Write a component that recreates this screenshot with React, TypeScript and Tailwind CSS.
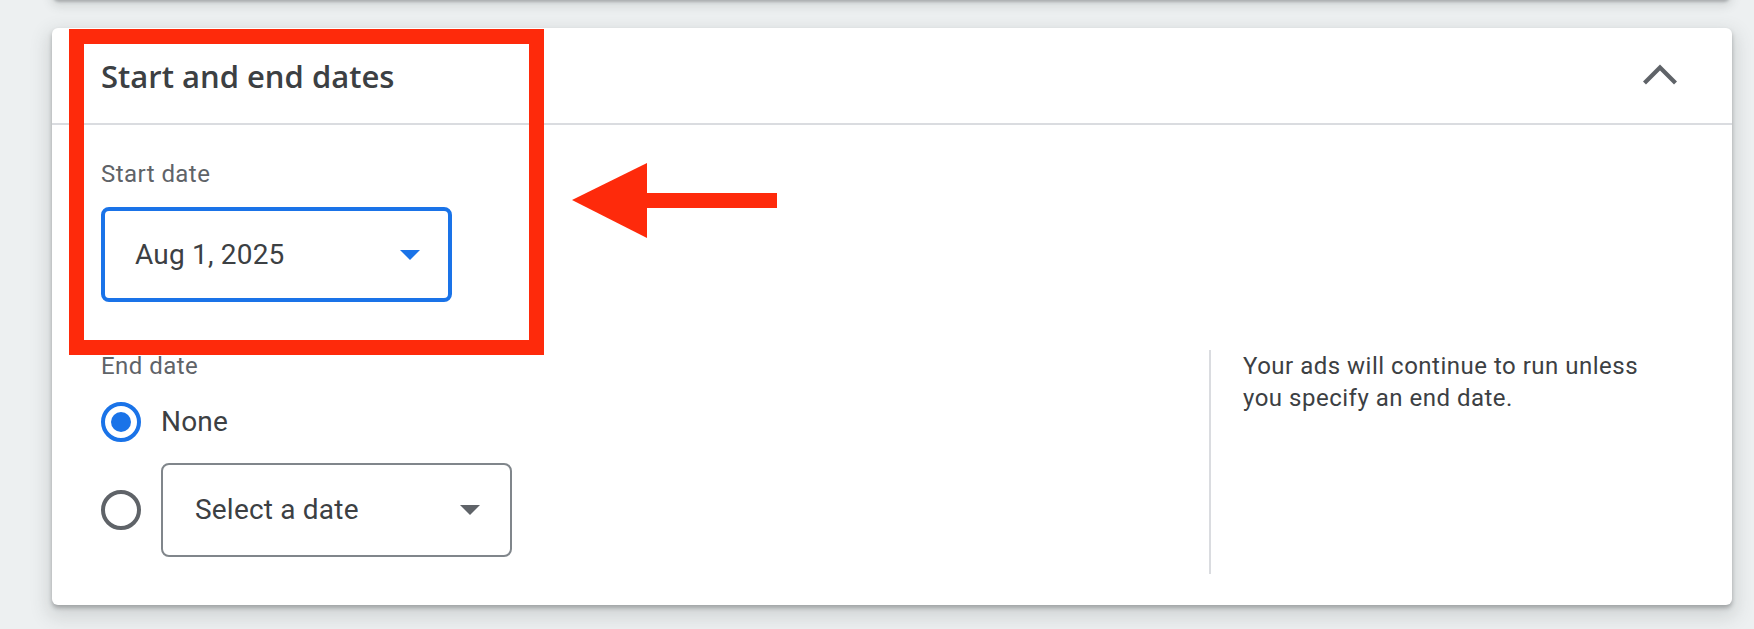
import React from 'react';

function Caret({ color }: { color: string }) {
  return (
    <svg width="20" height="10" viewBox="0 0 20 10" className="shrink-0">
      <polygon points="0,0 20,0 10,10" fill={color} />
    </svg>
  );
}

function Radio({ checked }: { checked: boolean }) {
  return (
    <div
      className={`w-[40px] h-[40px] shrink-0 rounded-full border-4 flex items-center justify-center ${
        checked ? 'border-[#1a73e8]' : 'border-[#5f6368]'
      }`}
    >
      {checked && <div className="w-[20px] h-[20px] rounded-full bg-[#1a73e8]" />}
    </div>
  );
}

export default function App() {
  return (
    <div className="relative flex flex-col w-full h-[629px] overflow-hidden bg-[#edf0f1] font-['Roboto',sans-serif]">
      {/* bottom of the card above */}
      <div className="h-[20px] -mt-[20px] ml-[53px] mr-[24px] bg-white rounded-b-[6px] shadow-[0_2px_3px_rgba(60,64,67,0.3),0_4px_10px_3px_rgba(60,64,67,0.12)]" />

      <div className="mt-[28px] ml-[52px] mr-[22px] bg-white rounded-[6px] shadow-[0_3px_4px_rgba(60,64,67,0.35),0_8px_18px_5px_rgba(60,64,67,0.15)]">
        <div className="h-[97px] flex items-center justify-between pl-[49px] pr-[54px] border-b-2 border-[#dadce0]">
          <h2 className="text-[31px] leading-[40px] font-semibold text-[#3c4043] font-['Open_Sans',sans-serif]">
            Start and end dates
          </h2>
          <svg width="36" height="24" viewBox="0 0 36 24">
            <polyline
              points="2.5,19 18,3.5 33.5,19"
              fill="none"
              stroke="#5f6368"
              strokeWidth="4.2"
            />
          </svg>
        </div>

        <div className="pt-[33px] pl-[49px] pb-[31px]">
          <p className="text-[24px] leading-[32px] tracking-[0.45px] text-[#5f6368]">Start date</p>
          <button
            type="button"
            className="mt-[17px] w-[351px] h-[95px] border-4 border-[#1a73e8] rounded-[8px] flex items-center justify-between pl-[30px] pr-[28px]"
          >
            <span className="text-[28px] leading-[36px] tracking-[0.2px] text-[#3c4043]">Aug 1, 2025</span>
            <Caret color="#1a73e8" />
          </button>

          <div className="mt-[48px] flex">
            <div className="w-[1108px] pb-[17px]">
              <p className="text-[24px] leading-[32px] tracking-[0.45px] text-[#5f6368]">End date</p>
              <label className="mt-[16px] h-[48px] flex items-center gap-[20px] cursor-pointer">
                <Radio checked />
                <span className="text-[28px] leading-[36px] tracking-[0.2px] text-[#3c4043]">None</span>
              </label>
              <div className="mt-[17px] flex items-center gap-[20px]">
                <Radio checked={false} />
                <button
                  type="button"
                  className="w-[351px] h-[94px] border-2 border-[#80868b] rounded-[8px] flex items-center justify-between pl-[32px] pr-[30px]"
                >
                  <span className="text-[28px] leading-[36px] tracking-[0.2px] text-[#3c4043]">Select a date</span>
                  <Caret color="#5f6368" />
                </button>
              </div>
            </div>
            <div className="border-l-2 border-[#dadce0] pl-[32px]">
              <p className="max-w-[420px] text-[24px] leading-[32px] tracking-[0.5px] text-[#3c4043]">
                Your ads will continue to run unless you specify an end date.
              </p>
            </div>
          </div>
        </div>
      </div>

      {/* red annotation */}
      <div className="absolute left-[69px] top-[29px] w-[475px] h-[326px] border-[15px] border-[#fe2a0b]" />
      <svg className="absolute left-[570px] top-[160px]" width="210" height="80" viewBox="0 0 210 80">
        <polygon points="2,40 77,3 77,78" fill="#fe2a0b" />
        <rect x="76" y="33" width="131" height="15" fill="#fe2a0b" />
      </svg>
    </div>
  );
}
